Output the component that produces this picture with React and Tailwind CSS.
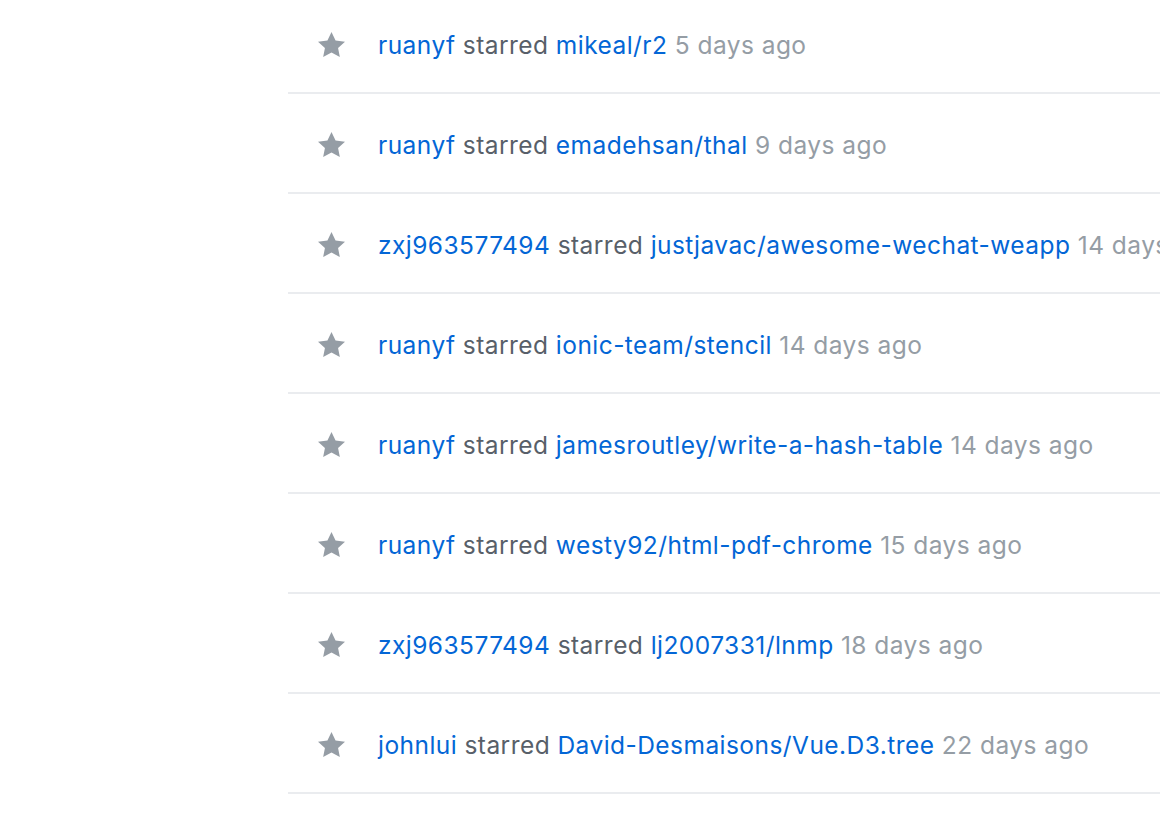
import React from "react";

const rows = [
  ["ruanyf", "mikeal/r2", "5 days ago"],
  ["ruanyf", "emadehsan/thal", "9 days ago"],
  ["zxj963577494", "justjavac/awesome-wechat-weapp", "14 days ago"],
  ["ruanyf", "ionic-team/stencil", "14 days ago"],
  ["ruanyf", "jamesroutley/write-a-hash-table", "14 days ago"],
  ["ruanyf", "westy92/html-pdf-chrome", "15 days ago"],
  ["zxj963577494", "lj2007331/lnmp", "18 days ago"],
  ["johnlui", "David-Desmaisons/Vue.D3.tree", "22 days ago"],
];

function Star() {
  return (
    <svg width="27" height="31" viewBox="0 0 14 16" className="shrink-0" aria-hidden="true">
      <path
        fill="#959da5"
        d="M14 6l-4.9-.64L7 1 4.9 5.36 0 6l3.6 3.26L2.67 14 7 11.67 11.33 14l-.93-4.74L14 6z"
      />
    </svg>
  );
}

export default function App() {
  return (
    <div
      className="w-[1160px] h-[822px] overflow-hidden bg-white"
      style={{ fontFamily: 'Inter, "Liberation Sans", Arial, sans-serif' }}
    >
      <div className="ml-[288px] w-[1000px] -mt-[6px]">
        {rows.map(([user, repo, time], i) => (
          <div
            key={i}
            className="h-[100px] border-b-2 border-[#eaecef] flex items-center pl-[30px] pt-[4px] whitespace-nowrap"
          >
            <Star />
            <div className="ml-[33px] text-[24.5px] tracking-[0.45px] leading-[32px] text-[#586069]">
              <a className="text-[#0366d6]">{user}</a> starred{" "}
              <a className="text-[#0366d6]">{repo}</a>{" "}
              <span className="text-[#959da5]">{time}</span>
            </div>
          </div>
        ))}
      </div>
    </div>
  );
}
